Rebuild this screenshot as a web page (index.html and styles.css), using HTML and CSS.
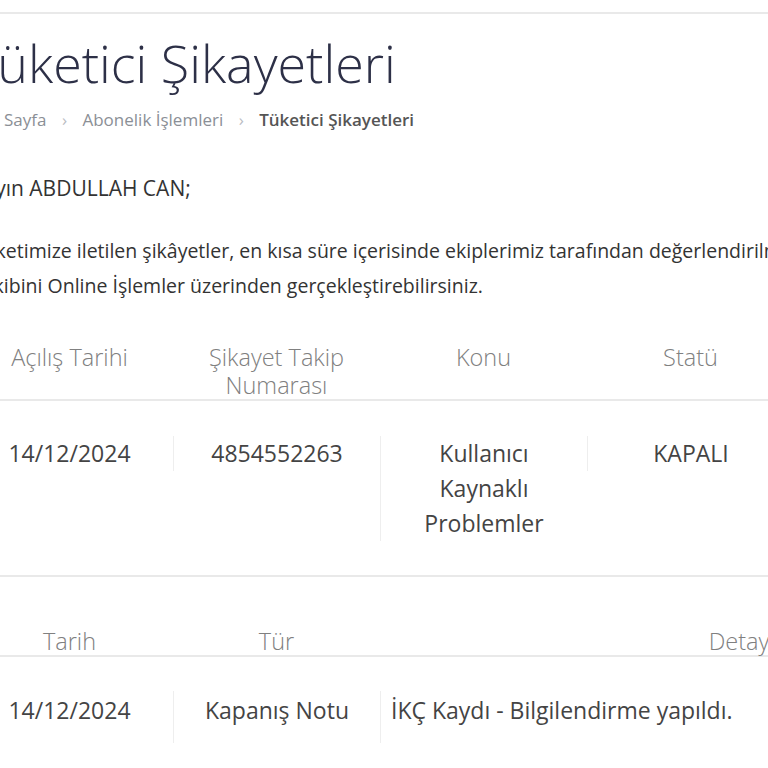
FILE: index.html
```html
<!DOCTYPE html>
<html lang="tr">
<head>
  <meta charset="UTF-8">
  <meta name="viewport" content="width=device-width, initial-scale=1.0">
  <title>Tüketici Şikayetleri</title>
  <link rel="stylesheet" href="styles.css">
</head>
<body>
  <div class="topbar"></div>

  <div class="page">
    <h1 class="page-title">Tüketici Şikayetleri</h1>

    <div class="breadcrumb">
      <a href="#">Ana Sayfa</a>
      <span class="sep">&rsaquo;</span>
      <a href="#">Abonelik İşlemleri</a>
      <span class="sep">&rsaquo;</span>
      <span class="current">Tüketici Şikayetleri</span>
    </div>

    <p class="greeting">Sayın ABDULLAH CAN;</p>

    <p class="info">Şirketimize iletilen şikâyetler, en kısa süre içerisinde ekiplerimiz tarafından değerlendirilmektedir. Şikâyet<br>Takibini Online İşlemler üzerinden gerçekleştirebilirsiniz.</p>

    <!-- şikayet listesi -->
    <table class="data-table complaints">
      <thead>
        <tr>
          <th>Açılış Tarihi</th>
          <th>Şikayet Takip<br>Numarası</th>
          <th>Konu</th>
          <th>Statü</th>
        </tr>
      </thead>
      <tbody>
        <tr>
          <td><div class="cell">14/12/2024</div></td>
          <td><div class="cell">4854552263</div></td>
          <td><div class="cell">Kullanıcı<br>Kaynaklı<br>Problemler</div></td>
          <td><div class="cell">KAPALI</div></td>
        </tr>
      </tbody>
    </table>

    <!-- şikayet detayları -->
    <table class="data-table details">
      <thead>
        <tr>
          <th>Tarih</th>
          <th>Tür</th>
          <th class="wide">Detay</th>
        </tr>
      </thead>
      <tbody>
        <tr>
          <td><div class="cell">14/12/2024</div></td>
          <td><div class="cell">Kapanış Notu</div></td>
          <td class="left"><div class="cell">İKÇ Kaydı - Bilgilendirme yapıldı.</div></td>
        </tr>
      </tbody>
    </table>
  </div>
</body>
</html>
```

FILE: styles.css
```css
:root {
  --title-color: #2d3047;
  --text-color: #333;
  --muted-color: #8b8f96;
  --line-color: #e9e9e9;
  --col-size: 207px;
}

html, body {
  overflow: hidden;
}

body {
  margin: 0;
  background: #fff;
  font-family: 'Open Sans', 'Liberation Sans', sans-serif;
  color: var(--text-color);
}

/* üst çizgi */
.topbar {
  height: 12px;
  border-bottom: 2px solid var(--line-color);
}

.page {
  width: 1200px;
  margin-left: -28px;
}

.page-title {
  margin: 13px 0 0 -2px;
  font-size: 52px;
  font-weight: 300;
  line-height: 72px;
  color: var(--title-color);
}

.breadcrumb {
  margin: 6px 0 0 -3px;
  font-size: 17px;
  line-height: 30px;
  color: var(--muted-color);
}

.breadcrumb a {
  color: var(--muted-color);
  text-decoration: none;
}

.breadcrumb .sep {
  margin: 0 11px;
  color: #b9bcc2;
}

.breadcrumb .current {
  font-weight: 600;
  color: #555;
}

.greeting {
  margin: 38px 0 0;
  font-size: 21px;
  line-height: 30px;
}

.info {
  margin: 30px 0 0;
  font-size: 19.5px;
  line-height: 35px;
}

.data-table {
  border-collapse: collapse;
  margin-left: -6px;
  table-layout: fixed;
}

.data-table th,
.data-table td {
  width: var(--col-size);
  padding: 0;
  text-align: center;
  vertical-align: top;
}

.data-table th {
  font-size: 23.5px;
  font-weight: 300;
  line-height: 28px;
  color: #808080;
}

.data-table thead tr {
  border-bottom: 2px solid var(--line-color);
}

.data-table td {
  font-size: 23px;
  line-height: 35px;
  color: #444;
}

.data-table td .cell {
  border-left: 1px solid #eee;
}

.data-table td:first-child .cell {
  border-left: none;
}

.complaints {
  margin-top: 40px;
}

.complaints td {
  padding: 35px 0 34px;
}

.complaints tbody tr {
  border-bottom: 2px solid var(--line-color);
}

.details {
  margin-top: 50px;
}

.details th.wide {
  width: 718px;
}

.details td {
  padding: 34px 0 20px;
}

.details td .cell {
  padding: 2px 0 15px;
}

.details td.left {
  text-align: left;
}

.details td.left .cell {
  padding-left: 10px;
}
```
